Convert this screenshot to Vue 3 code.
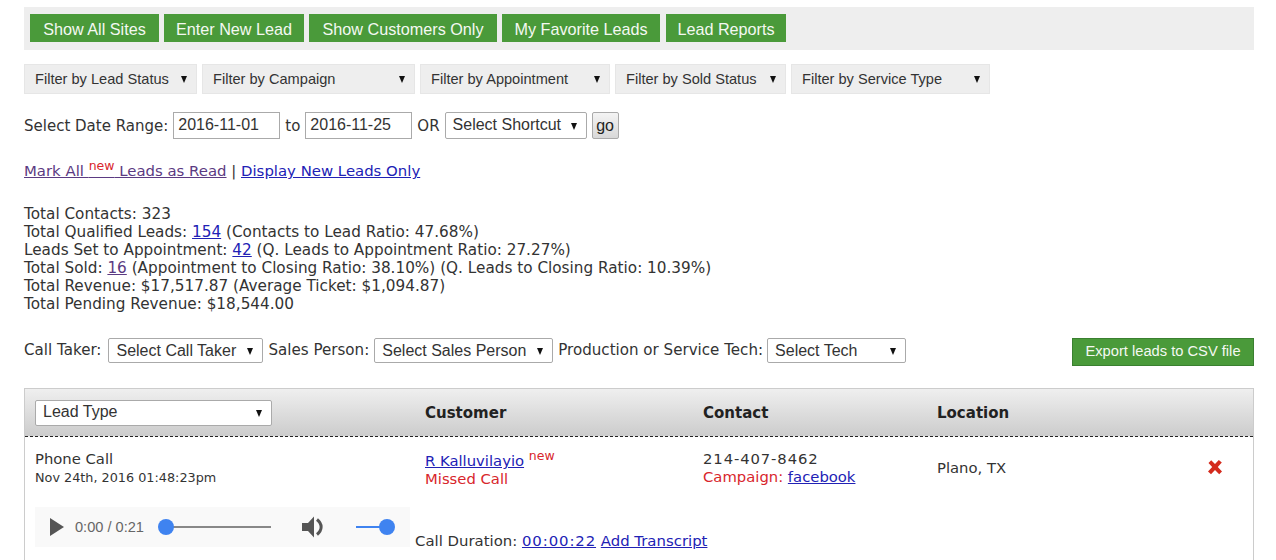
<template>
  <div class="page">
    <nav class="topnav">
      <a
        v-for="item in navItems"
        :key="item.label"
        class="nav-btn"
        :style="{ width: item.width + 'px' }"
        href="#"
      >{{ item.label }}</a>
    </nav>

    <div class="filters">
      <label v-for="f in filters" :key="f.label" class="filter" :style="{ width: f.width + 'px' }">
        <select><option>{{ f.label }}</option></select>
      </label>
    </div>

    <div class="date-row">
      <span>Select Date Range:</span>
      <input class="date-input" type="text" value="2016-11-01" />
      <span>to</span>
      <input class="date-input" type="text" value="2016-11-25" />
      <span>OR</span>
      <label class="pick shortcut"><select><option>Select Shortcut</option></select></label>
      <button class="go" type="button">go</button>
    </div>

    <div class="mark-row">
      <a class="visited" href="#">Mark All <sup class="new">new</sup> Leads as Read</a>
      |
      <a href="#">Display New Leads Only</a>
    </div>

    <div class="stats">
      <div>Total Contacts: 323</div>
      <div>Total Qualified Leads: <a href="#">154</a> (Contacts to Lead Ratio: 47.68%)</div>
      <div>Leads Set to Appointment: <a href="#">42</a> (Q. Leads to Appointment Ratio: 27.27%)</div>
      <div>Total Sold: <a class="visited" href="#">16</a> (Appointment to Closing Ratio: 38.10%) (Q. Leads to Closing Ratio: 10.39%)</div>
      <div>Total Revenue: $17,517.87 (Average Ticket: $1,094.87)</div>
      <div>Total Pending Revenue: $18,544.00</div>
    </div>

    <div class="people-row">
      <span>Call Taker:</span>
      <label class="pick taker"><select><option>Select Call Taker</option></select></label>
      <span>Sales Person:</span>
      <label class="pick sales"><select><option>Select Sales Person</option></select></label>
      <span>Production or Service Tech:</span>
      <label class="pick tech"><select><option>Select Tech</option></select></label>
      <a class="export" href="#">Export leads to CSV file</a>
    </div>

    <section class="leads">
      <div class="leads-head lead-grid">
        <label class="pick lead-type"><select><option>Lead Type</option></select></label>
        <div>Customer</div>
        <div>Contact</div>
        <div>Location</div>
      </div>

      <div class="lead-row lead-grid">
        <div>
          <div>Phone Call</div>
          <div class="when">Nov 24th, 2016 01:48:23pm</div>
        </div>
        <div class="customer">
          <div class="customer-name"><a href="#">R Kalluvilayio</a> <sup class="new">new</sup></div>
          <div class="red">Missed Call</div>
        </div>
        <div>
          <div class="digits">214-407-8462</div>
          <div><span class="red">Campaign:</span> <a href="#">facebook</a></div>
        </div>
        <div class="place">Plano, TX</div>
        <svg class="remove" viewBox="0 0 16 16" width="16" height="16">
          <path d="M1.5 4 4.2 1.2 8 5 11.8 1 14.8 3.6 10.8 8 15 12.6 12.2 15.2 8 11 4 15.2 1 12.4 5.2 8Z" fill="#d42a1c" />
        </svg>
      </div>

      <div class="audio-row">
        <div class="player">
          <svg class="play" viewBox="0 0 14 18" width="14" height="18"><path d="M0 0 14 9 0 18Z" fill="#555" /></svg>
          <span class="time">0:00 / 0:21</span>
          <div class="track seek"><i class="knob"></i></div>
          <svg class="speaker" viewBox="0 0 23 24" width="23" height="24">
            <path d="M0 8H6L12 1.5V22.5L6 16H0Z" fill="#555" />
            <path d="M15 4.5C20.5 9 20.5 15 15 19.5" fill="none" stroke="#555" stroke-width="3" />
          </svg>
          <div class="track volume"><i class="knob"></i></div>
        </div>
        <div class="duration">
          Call Duration: <a class="digits" href="#">00:00:22</a> <a href="#">Add Transcript</a>
        </div>
      </div>
    </section>
  </div>
</template>

<script setup>
const navItems = [
  { label: 'Show All Sites', width: 129 },
  { label: 'Enter New Lead', width: 140 },
  { label: 'Show Customers Only', width: 188 },
  { label: 'My Favorite Leads', width: 158 },
  { label: 'Lead Reports', width: 120 },
]

const filters = [
  { label: 'Filter by Lead Status', width: 173 },
  { label: 'Filter by Campaign', width: 213 },
  { label: 'Filter by Appointment', width: 190 },
  { label: 'Filter by Sold Status', width: 171 },
  { label: 'Filter by Service Type', width: 199 },
]
</script>

<style>
html, body {
  margin: 0;
  height: 560px;
  overflow: hidden;
  background: #fff;
}
</style>

<style scoped>
.page {
  padding: 7px 22px 0 24px;
  font-family: "DejaVu Sans", Verdana, sans-serif;
  font-size: 14.9px;
  line-height: 18px;
  color: #333;
}

a {
  color: #2121b5;
}

.visited {
  color: #5b3a82;
}

.red {
  color: #d8262c;
}

.new {
  color: #d8262c;
  font-size: 12.5px;
  line-height: 0;
}

.digits {
  letter-spacing: 0.9px;
}

/* top buttons */
.topnav {
  display: flex;
  gap: 5px;
  padding: 7px 6px 8px;
  background: #eee;
}

.nav-btn {
  height: 28px;
  line-height: 30px;
  text-align: center;
  background: #4a9a3a;
  color: #f4f8f2;
  font-family: "Liberation Sans", Arial, sans-serif;
  font-size: 16.2px;
  text-decoration: none;
}

.nav-btn:nth-child(4) {
  margin-right: 1px;
}

/* selects */
select {
  appearance: none;
  width: 100%;
  height: 100%;
  border: 0;
  background: transparent;
  font: inherit;
  color: inherit;
  padding: 0 0 2px;
  outline: none;
}

.filter,
.pick {
  position: relative;
  display: block;
  box-sizing: border-box;
  flex: none;
  font-family: "Liberation Sans", Arial, sans-serif;
}

.filter::after,
.pick::after {
  content: "";
  position: absolute;
  top: 50%;
  right: 9px;
  margin-top: -3px;
  border-style: solid;
  border-width: 7px 3.5px 0;
  border-color: #111 transparent transparent;
  pointer-events: none;
}

.filters {
  display: flex;
  gap: 5px;
  margin-top: 14px;
}

.filter {
  height: 30px;
  background: #eee;
  border: 1px solid #e6e6e6;
  font-size: 14.6px;
  color: #333;
}

.filter select {
  padding-left: 10px;
  padding-bottom: 0;
}

.pick {
  height: 27px;
  background: #fff;
  border: 1px solid #aaa;
  border-radius: 2px;
  font-size: 16px;
  color: #333;
}

.pick select {
  padding-left: 7px;
}

/* date range */
.date-row {
  display: flex;
  align-items: center;
  gap: 5px;
  margin-top: 18px;
  height: 27px;
  font-size: 15px;
}

.date-input {
  box-sizing: border-box;
  width: 107px;
  height: 27px;
  padding: 0 4px 2px;
  border: 1px solid #aaa;
  font-family: "Liberation Sans", Arial, sans-serif;
  font-size: 16px;
  color: #333;
}

.shortcut {
  width: 142px;
}

.go {
  box-sizing: border-box;
  width: 27px;
  height: 27px;
  padding: 0;
  border: 1px solid #aaa;
  border-radius: 2px;
  background: linear-gradient(#f4f4f4, #d8d8d8);
  font-family: "Liberation Sans", Arial, sans-serif;
  font-size: 16px;
  color: #222;
}

.mark-row {
  margin-top: 23px;
  height: 22px;
}

.stats {
  margin-top: 21px;
  font-size: 15.25px;
}

/* people row */
.people-row {
  display: flex;
  align-items: flex-start;
  gap: 5px;
  margin-top: 25px;
  font-size: 15.1px;
  line-height: 24px;
}

.people-row .pick {
  height: 25px;
}

.people-row .pick select {
  padding-bottom: 3px;
}

.taker {
  width: 155px;
  margin-left: 2px;
}

.sales {
  width: 179px;
}

.tech {
  width: 139px;
  margin-left: -1px;
}

.export {
  margin-left: auto;
  box-sizing: border-box;
  width: 182px;
  height: 28px;
  line-height: 24px;
  text-align: center;
  background: #4a9a3a;
  border: 1px solid #3a8030;
  color: #f4f8f2;
  font-family: "Liberation Sans", Arial, sans-serif;
  font-size: 14.7px;
  text-decoration: none;
}

/* leads table */
.leads {
  margin-top: 22px;
  border: 1px solid #ccc;
  border-bottom: 0;
  height: 200px;
}

.lead-grid {
  display: grid;
  grid-template-columns: 390px 278px 234px 1fr;
  padding-left: 10px;
}

.leads-head {
  height: 47px;
  align-items: center;
  background: linear-gradient(#efefef, #ccc);
  border-bottom: 1px dashed #222;
  font-weight: bold;
  font-size: 15px;
  color: #222;
}

.lead-type {
  width: 237px;
  height: 26px;
  font-weight: normal;
}

.lead-row {
  position: relative;
  padding-top: 13px;
  height: 57px;
  font-size: 14.8px;
}

.when {
  font-size: 12.8px;
  margin-top: 1px;
}

.customer-name {
  padding-top: 2px;
  height: 18px;
}

.place {
  padding-top: 9px;
}

.remove {
  position: absolute;
  top: 22px;
  right: 30px;
}

/* audio */
.audio-row {
  display: flex;
  align-items: flex-end;
  padding-left: 10px;
}

.player {
  display: flex;
  align-items: center;
  box-sizing: border-box;
  width: 375px;
  height: 40px;
  padding-left: 15px;
  background: #f9f9f9;
}

.time {
  margin-left: 11px;
  width: 91px;
  flex: none;
  font-family: "Liberation Sans", Arial, sans-serif;
  font-size: 14.6px;
  color: #666;
}

.track {
  position: relative;
  height: 2px;
  flex: none;
}

.knob {
  position: absolute;
  top: -7px;
  width: 16px;
  height: 16px;
  border-radius: 50%;
  background: #3f83f0;
}

.seek {
  width: 105px;
  background: #888;
}

.seek .knob {
  left: -8px;
}

.speaker {
  flex: none;
  margin-left: 31px;
}

.volume {
  width: 31px;
  margin-left: 31px;
  background: #3f83f0;
}

.volume .knob {
  right: -8px;
}

.duration {
  margin-left: 5px;
  margin-bottom: -1px;
  line-height: 14px;
  font-size: 14.9px;
}
</style>
